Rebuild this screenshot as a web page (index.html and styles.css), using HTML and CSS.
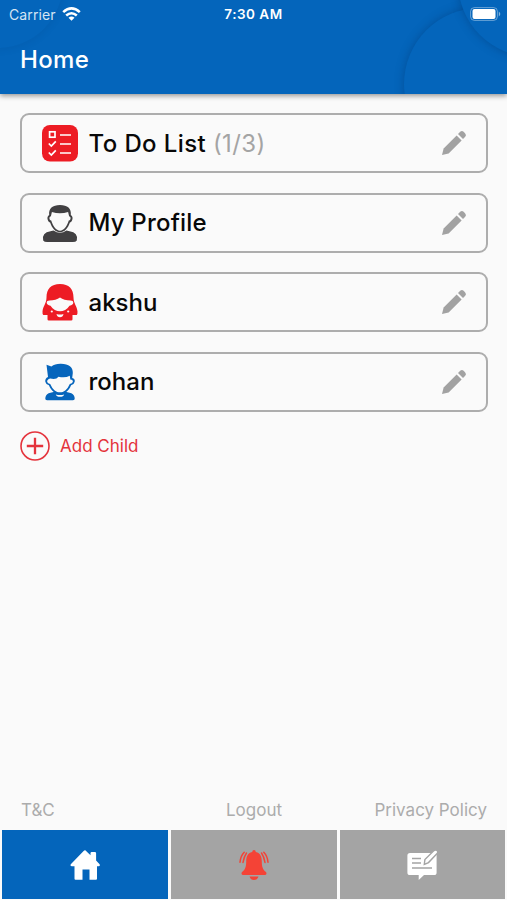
FILE: index.html
```html
<!DOCTYPE html>
<html lang="en">
<head>
  <meta charset="UTF-8" />
  <meta name="viewport" content="width=device-width, initial-scale=1.0"/>
  <title>Home</title>
  <link rel="stylesheet" href="styles.css">
</head>
<body>
  <svg class="symbols" width="0" height="0">
    <symbol id="pencil" viewBox="0 0 26 26">
      <path d="M1 25l1.600-6.600L15.600 5.400l5 5L7.600 23.400z"/>
      <path d="M17 4l2.200-2.200q1.700-1.500 3.400 0l1.600 1.600q1.600 1.700 0 3.400L22 9z"/>
    </symbol>
  </svg>
  <div class="app">
    <header class="header">
      <div class="rings">
        <span class="circle circle-left"></span>
        <span class="circle circle-mid"></span>
        <span class="circle circle-right"></span>
      </div>
      <div class="status-bar">
        <div class="carrier">
          <span>Carrier</span>
          <svg width="19" height="14" viewBox="0 0 19 14" fill="none" stroke="#fff" stroke-width="2.600">
            <path d="M1.200 5.100q8.300-7.400 16.600 0"/>
            <path d="M4.200 8.500q5.300-4.500 10.600 0"/>
            <path d="M6.500 10.700q3-2.300 6 0L9.500 13.700z" fill="#fff" stroke="none"/>
          </svg>
        </div>
        <span class="time">7:30 AM</span>
        <svg class="battery" width="31" height="14" viewBox="0 0 31 14">
          <rect x=".6" y=".6" width="26.800" height="12.800" rx="3.800" fill="none" stroke="#fff" stroke-opacity=".4"/>
          <rect x="2.500" y="2" width="23" height="10" rx="2" fill="#fff"/>
          <path d="M28.800 4.600q3 2.400 0 4.800z" fill="#fff" fill-opacity=".5"/>
        </svg>
      </div>
      <h1>Home</h1>
    </header>

    <main class="content">
      <div class="card">
        <svg class="avatar" viewBox="0 0 38 38">
          <rect x="1" y="1" width="36" height="36.500" rx="8" fill="#ed1c24"/>
          <g fill="none" stroke="#fff" stroke-width="1.700">
            <rect x="8.600" y="7.800" width="5.400" height="5.400"/>
            <path d="M19 11h11M19 20h11M19 29h11M7.800 19.500l2.500 2.500 4.500-4.700M7.800 28.500l2.500 2.500 4.500-4.700"/>
          </g>
        </svg>
        <span class="name todo">To Do List <span class="count">(1/3)</span></span>
        <svg class="edit"><use href="#pencil"/></svg>
      </div>
      <div class="card">
        <svg class="avatar" viewBox="0 0 38 38" fill="#414042">
          <path d="M2.200 36.500Q.5 28.500 9.500 27.300l3-.8q6.500 4.600 13 0l3 .8q9 1.200 7.300 9.200-1 1.500-4 1.500H6.200q-3 0-4-1.500z"/>
          <path d="M8.200 11C7.400 4.500 11.500 1 19 1s11.600 3.500 10.800 10q2.900 2 1.100 5.800-.7 1.500-2 1.600C27 24 23.500 28.200 19 28.200S11 24 9.100 18.400q-1.300-.1-2-1.600Q5.300 13 8.200 11z"/>
          <path fill="#fafafa" d="M9.900 12.200l1-4.200q8.100 2.600 16.200 0l1 4.200q2.200.8 1.200 3.200-.5 1-1.500 1.200C26 22.300 22.900 26.700 19 26.700s-7-4.400-8.800-10.100q-1-.2-1.500-1.200-1-2.400 1.200-3.200z"/>
        </svg>
        <span class="name profile">My Profile</span>
        <svg class="edit"><use href="#pencil"/></svg>
      </div>
      <div class="card">
        <svg class="avatar" viewBox="0 0 38 38" fill="#ed1c24">
          <path d="M19 1C10 1 5.500 6 5.500 14.500 5.500 20.500 2 23 1.500 28.500q-.2 2.800.8 3.500h4.200v4.200q0 1.300 1.300 1.300h22.400q1.300 0 1.300-1.300V32h4.200q1-.7.8-3.500C36 23 32.500 20.500 32.500 14.500 32.500 6 28 1 19 1z"/>
          <path fill="#fafafa" d="M8.500 17.500q6.500 0 10.500-3 4 3 10.500 3 2.800 0 2.800 2 0 2.500-3.800 3.300C26 26.500 22.500 28.300 19 28.300s-7-1.800-9.500-5.500q-3.800-.8-3.800-3.300 0-2 2.800-2zM15.500 31q3.500 1.200 7 0-.7 3.200-3.500 3.200T15.500 31z"/>
          <circle cx="10.800" cy="28.500" r="1.100" fill="#fafafa"/>
          <circle cx="27.200" cy="28.500" r="1.100" fill="#fafafa"/>
        </svg>
        <span class="name">akshu</span>
        <svg class="edit"><use href="#pencil"/></svg>
      </div>
      <div class="card">
        <svg class="avatar" viewBox="0 0 38 38" fill="#0665bc">
          <path d="M6.200 37.300q-2.500 0-1.700-3.300.8-3.500 5-4.300l5-1.200h9l5 1.200q4.200.8 5 4.300.8 3.300-1.700 3.300z"/>
          <path d="M7 14L5.500 1.700l4.900 1.800Q14 .5 20 .7 32 1 31.800 10l-.6 5q3 .5 2.500 3.700-.5 2.600-3.600 3.600C27.500 28.500 23.300 31 19 31S10.500 28.500 7.900 22.300q-3.100-1-3.600-3.600Q3.800 15.500 7 14z"/>
          <path fill="#fafafa" d="M9.200 15.500q6 1.500 8.300-1.800 6.500 1.600 11.300-1l.5 3.800q3 .2 2.500 2.400-.5 1.700-3 2C26 27 22.800 29.300 19 29.300S12 27 9.200 20.900q-2.500-.3-3-2-.5-2.300 3-3.400z"/>
          <path fill="#fafafa" d="M14.800 31.500q4.200 1.200 8.400 0-.7 2.300-4.200 2.300t-4.200-2.300z"/>
        </svg>
        <span class="name">rohan</span>
        <svg class="edit"><use href="#pencil"/></svg>
      </div>
      <div class="add-child">
        <svg width="30" height="30" viewBox="0 0 30 30" fill="none" stroke="#e4333c">
          <circle cx="15" cy="15" r="14" stroke-width="1.600"/>
          <path d="M15 6.800v16.400M6.800 15h16.400" stroke-width="2.300"/>
        </svg>
        <span>Add Child</span>
      </div>
    </main>

    <div class="links">
      <span>T&amp;C</span>
      <span>Logout</span>
      <span>Privacy Policy</span>
    </div>
    <nav class="tabs">
      <div class="tab active">
        <svg width="30" height="30" viewBox="0 0 30 30" fill="#fff">
          <path d="M15.300.3L20.500 5.300V3.200q0-1.200 1.200-1.200h3.200q1.200 0 1.200 1.200v7.300l3.500 3.700q.8 1.800-1 2h-1.600v12.600q0 1-1 1h-6.500V19.500h-7v10.300H5.500q-1 0-1-1V16.200H2q-2.200-.2-1.200-2L13.600 1q.8-.9 1.700-.7z"/>
        </svg>
      </div>
      <div class="tab">
        <svg width="30" height="30" viewBox="0 0 30 30" fill="#f44336">
          <path d="M15 0q1.700 0 1.800 2c4.800 1.300 6 4.800 6 9.500 0 5.500 1.200 8.300 4.200 10.500 1 1.800.3 3-.8 3H3.800C2.700 25 2 23.800 3 22c3-2.200 4.200-5 4.200-10.500 0-4.700 1.200-8.200 6-9.500Q13.300 0 15 0zM10.500 26.500h9Q18.300 30 15 30t-4.500-3.500z"/>
          <path d="M5.200 2.200Q1.500 6 1 12.200M24.800 2.200q3.700 3.800 4.200 10M7.500 3Q5 6.500 4 12.500M22.500 3q2.500 3.500 3.500 9.500" fill="none" stroke="#f44336" stroke-width="1.500" stroke-linecap="round"/>
        </svg>
      </div>
      <div class="tab">
        <svg width="31" height="30" viewBox="0 0 31 30">
          <path d="M3 3h24q2.600 0 2.600 2.600v16.800q0 2.600-2.600 2.600H17l-5.300 5v-5H3Q.4 25 .4 22.400V5.600Q.4 3 3 3z" fill="#fff"/>
          <path d="M5 8.500h9M5 13h9M5 18h20" stroke="#a4a4a4" stroke-width="1.400"/>
          <path d="M17.300 14.300l.6-4.800L27 .6q1.600-1.300 3 0t.1 3L21.500 12.600z" fill="#fff" stroke="#a4a4a4" stroke-width="1.400"/>
        </svg>
      </div>
    </nav>
  </div>
</body>
</html>
```
FILE: styles.css
```css
* {
  box-sizing: border-box;
}

body {
  margin: 0;
  background: #fafafa;
  font-family: Inter, sans-serif;
}

.symbols {
  position: absolute;
}

.app {
  display: flex;
  flex-direction: column;
  height: 900px;
}

.header {
  position: relative;
  height: 94px;
  background: #0465bb;
  color: white;
  box-shadow: 0 2px 5px rgba(0, 0, 0, 0.4);
}

/* soft rings behind the title */
.rings {
  position: absolute;
  inset: 0;
  overflow: hidden;
}

.circle {
  position: absolute;
  border-radius: 50%;
  box-shadow: 0 0 10px rgba(0, 40, 90, 0.35);
}

.circle-left {
  width: 130px;
  height: 130px;
  left: -67px;
  top: -82px;
  box-shadow: 0 0 9px rgba(0, 40, 90, 0.14);
}

.circle-mid {
  width: 152px;
  height: 152px;
  left: 404px;
  top: 8px;
  background: #0465bb;
}

.circle-right {
  width: 150px;
  height: 150px;
  left: 458px;
  top: -93px;
  background: #0465bb;
}

.status-bar {
  position: relative;
  display: grid;
  grid-template-columns: 1fr auto 1fr;
  align-items: center;
  height: 28px;
  padding: 0 6px 0 9px;
  font-size: 14px;
}

.carrier {
  display: flex;
  align-items: center;
  gap: 6px;
  color: #d5e4f3;
  letter-spacing: 0.1px;
}

.time {
  margin-right: 3px;
  font-weight: 600;
  font-size: 13.5px;
  letter-spacing: 0.5px;
}

.battery {
  justify-self: end;
}

h1 {
  position: relative;
  margin: 17px 0 0 20px;
  font-size: 24px;
  line-height: 30px;
  font-weight: 500;
  letter-spacing: 0.35px;
}

.content {
  display: flex;
  flex: 1;
  flex-direction: column;
  gap: 19.5px;
  padding: 19px 19.5px 0 20px;
}

.card {
  display: flex;
  align-items: center;
  height: 60px;
  padding: 0 19px 0 18.5px;
  border: 2px solid #adadad;
  border-radius: 9px;
}

.avatar {
  width: 38px;
  height: 38px;
  margin-right: 10px;
}

.name {
  flex: 1;
  font-size: 24px;
  font-weight: 500;
  color: #080808;
}

.todo {
  letter-spacing: 0.4px;
}

.profile {
  letter-spacing: 0.2px;
}

.count {
  font-weight: 400;
  color: #a4a4a4;
}

.edit {
  width: 26px;
  height: 26px;
  fill: #a2a2a2;
}

.add-child {
  display: flex;
  align-items: center;
  gap: 10px;
  color: #e4333c;
  font-size: 17px;
}

.links {
  display: grid;
  grid-template-columns: 1fr auto 1fr;
  align-items: center;
  height: 40px;
  padding: 0 20px 0 21px;
  color: #acacac;
  font-size: 17px;
}

.links span:last-child {
  text-align: right;
}

.tabs {
  display: grid;
  grid-template-columns: repeat(3, 1fr);
  gap: 3px;
  height: 70px;
  padding: 0 1.5px 1px 2px;
}

.tab {
  display: flex;
  align-items: center;
  justify-content: center;
  background: #a4a4a4;
}

.tab.active {
  background: #0465bb;
}
```
